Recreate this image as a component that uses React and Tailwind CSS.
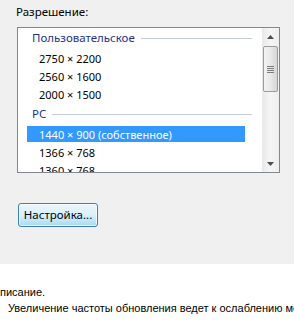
const font = { fontFamily: '"Noto Sans", "Open Sans", sans-serif' }
const descFont = { fontFamily: '"Liberation Sans", Arial, sans-serif' }

function GroupHeader({ title, className = '' }) {
  return (
    <div className={`flex items-center h-[20px] pl-[14px] pr-[10px] ${className}`}>
      <span className="text-[#1e3287] leading-none text-[11.5px]">{title}</span>
      <div className="flex-1 h-px bg-[#c6cbd8] ml-[6px]" />
    </div>
  )
}

function Item({ label, selected }) {
  return (
    <div
      className={`h-[16px] mb-[2px] ml-[9px] mr-[17px] pl-[12px] flex items-center leading-none ${
        selected ? 'bg-[#3399ff] text-white' : 'text-black'
      }`}
    >
      {label}
    </div>
  )
}

function ScrollBar() {
  return (
    <div className="w-[17px] h-full flex flex-col bg-gradient-to-r from-[#e9e9e9] via-[#f5f5f5] to-[#eeeeee]">
      <div className="h-[17px] flex items-center justify-center">
        <svg width="7" height="4" viewBox="0 0 7 4">
          <path d="M3.5 0 L7 4 L0 4 Z" fill="#4d4d4d" />
        </svg>
      </div>
      <div className="mx-px mt-px h-[46px] rounded-[2px] border border-[#9b9b9b] bg-gradient-to-r from-[#f3f3f3] via-[#e8e8e8] to-[#d6d6d6] flex flex-col items-center justify-center gap-[1px]">
        {[0, 1, 2, 3].map((i) => (
          <div key={i} className="w-[7px] h-px bg-[#7d7d7d]" />
        ))}
      </div>
      <div className="flex-1" />
      <div className="h-[17px] flex items-center justify-center">
        <svg width="7" height="4" viewBox="0 0 7 4">
          <path d="M0 0 L7 0 L3.5 4 Z" fill="#4d4d4d" />
        </svg>
      </div>
    </div>
  )
}

export default function App() {
  return (
    <div className="w-[294px] h-[324px] bg-white text-[11px] overflow-hidden" style={font}>
      <div className="h-[264px] bg-[#f0f0f0] pt-[4px]">
        <div className="pl-[16px] h-[16px] leading-[16px] text-[11.5px] text-black">Разрешение:</div>
        <div className="ml-[17px] mt-[7px] w-[263px] h-[146px] border border-[#828790] bg-white flex">
          <div className="flex-1 overflow-hidden">
            <GroupHeader title="Пользовательское" className="mb-[2px]" />
            <Item label="2750 × 2200" />
            <Item label="2560 × 1600" />
            <Item label="2000 × 1500" />
            <GroupHeader title="PC" className="mt-[2px] mb-[2px]" />
            <Item label="1440 × 900 (собственное)" selected />
            <Item label="1366 × 768" />
            <Item label="1360 × 768" />
          </div>
          <ScrollBar />
        </div>
        <button className="ml-[18px] mt-[30px] w-[80px] h-[24px] rounded-[3px] border border-[#3c7fb1] bg-gradient-to-b from-[#eaf6fd] via-[#d9f0fc] to-[#a7d9f5] text-[11.5px] text-black leading-none shadow-[inset_0_0_0_1px_rgba(255,255,255,0.7)]">
          Настройка...
        </button>
      </div>
      <div className="pt-[20px] text-[11px] text-black leading-[16px] whitespace-nowrap" style={descFont}>
        <div>писание.</div>
        <div className="pl-[8px]">Увеличение частоты обновления ведет к ослаблению мерцания</div>
      </div>
    </div>
  )
}
